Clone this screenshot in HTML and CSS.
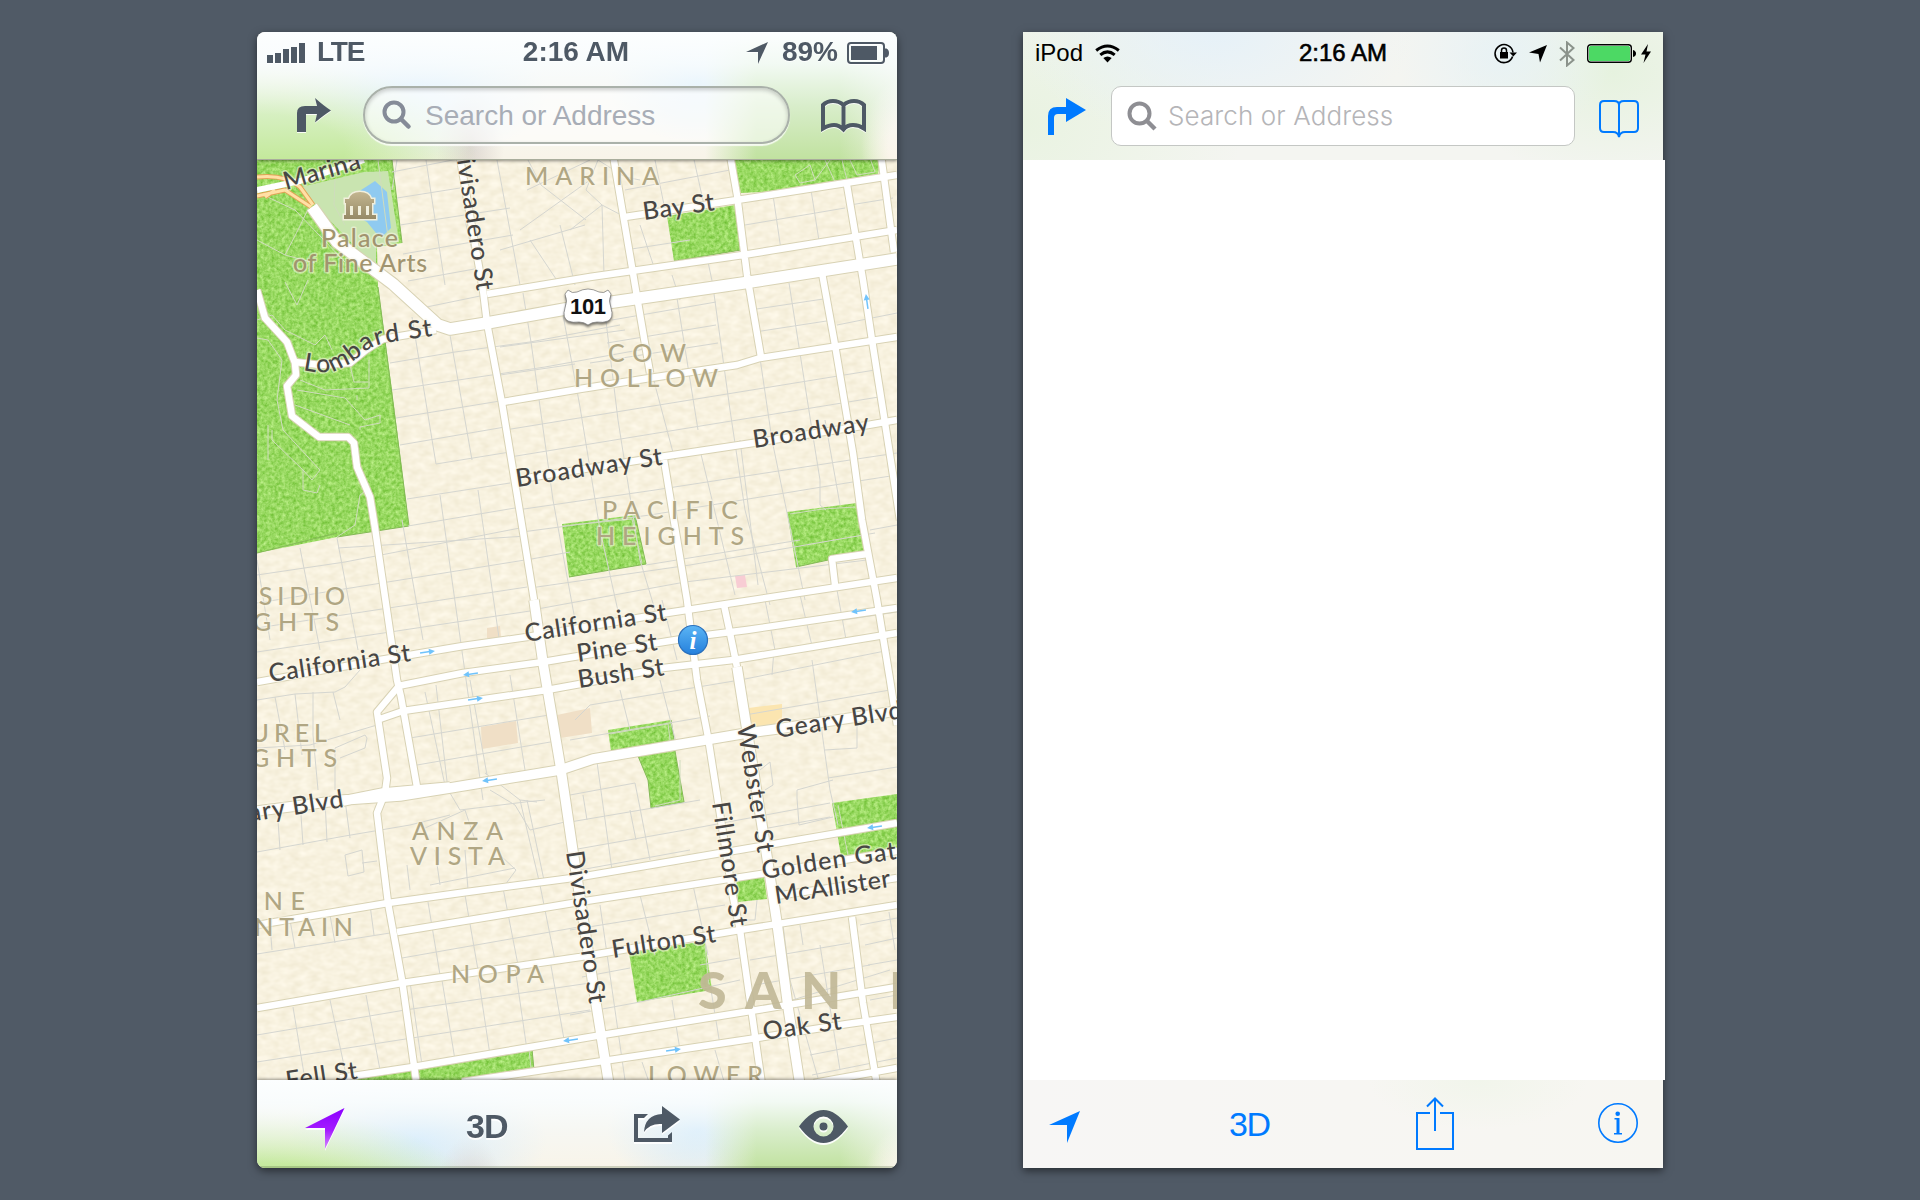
FILE: index.html
```html
<!DOCTYPE html>
<html lang="en">
<head>
<meta charset="utf-8">
<title>Maps</title>
<link rel="stylesheet" href="styles.css">
</head>
<body>
<main class="stage">
<section class="phone classic">
  <header class="top">
    <div class="status">
      <div class="status-left">
        <svg width="38" height="20" viewBox="0 0 38 20"><path d="M0 12h6v8H0zM8 10h6v10H8zM16 6h6v14h-6zM24 4h6v16h-6zM32 0h6v20h-6z"/></svg>
        <span class="carrier">LTE</span>
      </div>
      <span class="time">2:16 AM</span>
      <div class="status-right">
        <svg width="22" height="22" viewBox="0 0 22 22"><path d="M22 0L12 22V10H0z"/></svg>
        <span class="percent">89%</span>
        <svg class="battery" width="42" height="22" viewBox="0 0 42 22"><rect x="1" y="1" width="36" height="20" rx="3" fill="none" stroke="#4e5965" stroke-width="2"/><path d="M4 4h26v14H4zM38 6.5h1.500q2.500 1 2.500 4.500t-2.500 4.500H38z"/></svg>
      </div>
    </div>
    <div class="bar">
      <svg class="turn" width="35" height="35" viewBox="0 0 35 35"><path d="M0 34V15Q0 8 8 8H20L18 0Q27 8 34 12.500Q27 17 18 24.500L20 16H9V34z"/></svg>
      <div class="search">
        <svg width="30" height="30" viewBox="0 0 30 30"><circle cx="12" cy="12" r="9.500" fill="none" stroke="#858b98" stroke-width="4"/><path d="M19 19l7.500 7.500" stroke="#858b98" stroke-width="4.500" stroke-linecap="round"/></svg>
        <span>Search or Address</span>
      </div>
      <svg class="book" width="45" height="34" viewBox="0 0 45 34"><path d="M2 29.500V6Q6 2 12 2T22.500 6Q27 2 33 2T43 6V29.500Q38 26 32 26T22.500 30.500Q18 26 13 26T2 29.500zM22.500 5V29" fill="none" stroke="#4e5965" stroke-width="4"/></svg>
    </div>
  </header>
  <div class="map">
  <svg width="640" height="920" viewBox="257 160 640 920">
    <defs>
      <filter id="grass" x="0" y="0" width="100%" height="100%" color-interpolation-filters="sRGB">
        <feTurbulence type="fractalNoise" baseFrequency=".28" numOctaves="3" seed="4" result="n"/>
        <feColorMatrix in="n" values=".42 0 0 0 .385  .26 0 0 0 .72  .46 0 0 0 .15  0 0 0 0 1" result="c"/>
        <feComposite in="c" in2="SourceGraphic" operator="in"/>
      </filter>
      <filter id="sand" x="0" y="0" width="100%" height="100%" color-interpolation-filters="sRGB">
        <feTurbulence type="fractalNoise" baseFrequency=".1 .16" numOctaves="2" seed="2" result="n"/>
        <feColorMatrix in="n" values=".07 0 0 0 .937  .08 0 0 0 .908  .12 0 0 0 .815  0 0 0 0 1"/>
      </filter>
      <path id="lombard" d="M303 370Q328 376 345 366Q356 360 366 351Q374 345 391 342L445 334"/>
      <linearGradient id="pin" x1="0" y1="0" x2="0" y2="1"><stop offset="0" stop-color="#5bb5f5"/><stop offset="1" stop-color="#2580dc"/></linearGradient>
      <linearGradient id="stone" x1="0" y1="0" x2="0" y2="1"><stop offset="0" stop-color="#c3b58f"/><stop offset="1" stop-color="#968a67"/></linearGradient>
      <g id="roads">
        <path d="M457 141L483 290L487 323L502 403L520 513L534 600M257 290L265 318L287 342L295 363L296 375L287 386L292 416L319 437H348L354 443L357 467L370 497L375 528L397 680L401 697L417 787"/>
        <path d="M398 687L377 712L387 778L385 793L377 813L388 903L402 980L416 1080M377 720L403 711L547 690L580 684L663 668L733 660L897 633M398 686L463 673L543 662L657 643L707 635L747 630L897 608"/>
        <path d="M257 682L380 660L463 646L527 637L667 613L897 578M503 402L580 389L650 378L737 365L760 358L897 337M527 478L660 457L753 443L868 425L897 420"/>
        <path d="M664 460L687 600L697 680L708 737L733 897L740 930L762 1085M613 155L635 285L650 373M730 155L737 195L747 275L761 357M625 217L737 200L763 196L897 175M487 294L590 277L743 255L897 230"/>
        <path d="M847 185L863 280L872 340L885 423L900 520M822 273L835 345L853 453L862 520L877 600L890 680L897 725M881 155L894 252M867 554L832 559L835 585M724 605L730 633L737 667"/>
        <path d="M257 925L388 903L467 892L580 877L897 823M397 932L573 903L767 873L897 851M776 896L897 878M257 1008L402 983L580 957L740 930L897 905M340 1078L413 1067L602 1035L757 1010L897 987M462 1082L610 1060L757 1038L847 1024L897 1017M852 917L863 1003L877 1085M814 1083L897 1068M295 362L320 365L350 363L366 350L383 339L436 330"/>
      </g>
      <g id="wide">
        <path d="M534 600L543 663L561 770L572 845L595 997L609 1085M737 667L747 730L767 857L777 923L788 1007L800 1085"/>
        <path d="M257 811L343 800L400 796L450 788L560 770L593 759L747 733L777 729L897 711M343 801L383 793L450 787"/>
      </g>
      <path id="lomb-wide" d="M312 207L337 242L393 284L438 325L450 329L487 323L565 309L750 282L897 259"/>
      <g id="arrow"><path d="M-7 0H3" stroke="#70c3fb" stroke-width="1.500"/><path d="M2 -3L8 0L2 3z" fill="#70c3fb"/></g>
    </defs>
    <rect x="257" y="160" width="640" height="920" filter="url(#sand)"/>
    <g filter="url(#grass)">
      <path d="M257 160H392L402 243L377 247L378 287L392 390L409 526L337 537L257 553zM732 160H880L878 174L763 192L740 193zM667 216L735 205L741 250L674 261zM562 524L635 515L646 564L569 577zM787 512L857 503L865 552L796 567zM608 730L671 720L674 740L611 751zM638 756L675 751L684 802L651 808L648 780zM832 803L897 794V848L841 856zM736 879L764 876L767 899L738 902zM629 953L705 941L712 990L637 1002zM345 1080L532 1049L534 1070L462 1080z"/>
    </g>
    <path d="M392 160L402 243M378 287L409 526L337 537M257 553L337 533M635 515L646 564L569 577M671 720L674 740M675 751L684 802L651 808L648 780L638 756M741 250L674 261M796 567L865 552M532 1049L534 1070" fill="none" stroke="#84b957"/>
    <path d="M301 187L364 172L388 171L399 242L376 247V268L313 203z" fill="#c9e4b0"/>
    <path d="M375 181L387 192L391 228L383 236L376 233L367 222L360 218L358 192z" fill="#8fcaf0"/>
    <path d="M487 628L500 626L501 638H487zM481 727L516 721L518 743L482 749zM557 715L590 708L592 733L560 738z" fill="#f0dfc6"/>
    <path d="M748 708L782 704V723L750 727z" fill="#fbe5b0"/><path d="M735 576L745 575L747 587L737 588z" fill="#f8cdd4"/>
    <g class="lanes">
      <path d="M392 172L463 158M397 198L460 188M400 225L510 208M403 254L513 235M408 281L480 268M412 310L485 295M390 363L455 352L530 342L620 325M392 390L545 367L650 348M396 418L500 401M400 445L505 427M436 464L510 452M407 499L510 483M408 526L515 508M338 548L527 536M257 575L345 562L520 528M257 603L525 560M257 628L527 587M257 652L530 611M412 317L436 464M450 335L472 460M426 160L445 285M465 220L480 285M497 160L520 285M440 495L483 800M478 490L500 645M402 520L423 640M300 548L320 650M337 538L358 650M257 560L270 640"/>
      <path d="M523 293L531 342L553 500L575 620M563 315L580 407L600 530L620 620M605 313L618 420L640 560L655 610M640 300L655 385L675 460M677 298L698 430M714 294L730 410L745 510L770 605M750 290L772 440L805 600M789 283L812 430L820 480V505L826 510M825 420L840 505M500 347L625 330M500 375L575 364M612 320L716 302M607 343L716 325M590 363L718 343M750 310L830 298M755 332L833 320M837 325L897 313M505 430L875 370M510 457L885 396M517 510L655 490L850 460L897 453M522 532L650 515L865 480L897 475M526 560L570 552M646 565L800 540M530 588L690 565L875 533M532 610L685 582L867 560M870 530L897 525M700 450L735 595M740 440L758 585M662 600L677 660M765 600L775 650M800 595L813 650M837 590L847 645M843 620L897 612"/>
      <path d="M392 190L397 160M528 160L541 185L586 220M527 190L590 160M586 190L598 160L625 177L640 180M500 250L585 225M520 230L590 180M570 230L602 205L625 217M602 205L586 190M602 205L604 275M625 190L730 170M625 250L690 240M655 160L664 205M693 155L704 205M530 240L560 285M560 225L575 285M674 265L738 256M672 275L680 300M708 262L714 290M745 225L845 208M773 195L781 250M811 190L820 247M850 205L893 198M640 225L655 270"/>
      <path d="M257 700L295 694L335 692L345 687L360 670M257 748L310 745L377 725M275 697L285 750M295 694L302 755M313 692V735L318 790M333 692L340 720M340 758L365 748L367 738L365 735L335 748V790M257 852L345 836L410 825L450 815M277 805L280 850M300 800L303 845M325 800L327 842M345 800L350 838M345 855L362 850L364 872L348 876zM362 863L377 861M410 738L555 714M417 765L562 740M425 692L446 790M436 685L448 790M470 680L487 775M510 675L525 770M485 773L520 800L537 802M450 793L460 810L525 802L545 800M425 828L465 810L475 840M490 790L515 805L530 830L565 822M407 865L410 890M435 850L440 885M465 850L468 890M500 855L516 870L505 885M430 885L515 868M520 800L540 885M527 800L545 885"/>
      <path d="M402 958L590 925M397 932L416 1070M410 982L422 1065M257 1035L405 1010L590 983M257 1062L412 1038L590 1010M293 1007L305 1080M330 1000L345 1070M366 995L380 1070M442 980L455 1060M478 975L490 1055M515 967L527 1050M550 960L565 1045M257 954L390 933M270 925L272 950M290 920L295 948M330 915L335 943M370 905L374 935M428 902L440 975M465 895L478 970M503 888L518 965M540 885L555 960M575 720L590 705L740 680L890 650M570 740L710 716M570 795L635 783L640 808L650 860M583 795L587 820M630 810L636 840M570 822L700 800M572 850L685 830L830 803M580 870L690 850M596 755L612 870M620 690L630 730M660 680L678 750M570 930L725 905M582 977L630 968M600 905L625 1080M640 895L655 955M693 885L708 955M700 965L745 957M570 1015L640 1002L740 980M672 1000L680 1050M711 990L720 1045M642 1062L650 1085M715 1050L725 1085"/>
      <path d="M772 675L774 650M812 660L830 790L838 825M745 715L890 690M760 770L770 762L773 785L765 790M797 798V790L833 780M797 798L799 825L833 817M825 750L857 748V725M828 778L897 767M757 830L830 817M745 920H755L757 900M750 960L850 943M755 985L870 965M760 1010L890 970M783 925L790 980L820 1085M820 945L840 1070M860 925L897 918M865 945L897 938M868 965L897 960M870 1000L897 995M810 1055L897 1038M812 1075L897 1058M800 925L803 945M889 912L895 950"/>
    </g>
    <g class="lanes park">
      <path d="M257 240L285 255L315 263M310 205L298 230L285 255M257 192L295 210L345 262M285 282L297 305L308 280M257 320L272 315L285 330L315 345L325 335L332 350M257 338L268 340L282 360L277 400L283 430L320 470L312 480L303 470L303 490L317 493L320 485M268 425V460M272 430V440L305 472M300 380L325 390L369 388V360M297 390L345 398L365 420L380 415V423L360 427V430M295 405L350 425M357 395V400M350 365L354 382H368M337 537L355 525L360 495L367 490M795 175L810 165L815 180L830 160M815 180L800 183L795 175M825 160L835 182L847 180L842 160M850 160L857 175L875 172L870 158M562 526L632 519L642 563M610 734L668 724L670 740M790 514L823 509L855 507M680 760L680 800L655 806M705 945L709 985M838 805L848 855M529 1050L531 1068M334 170V172M378 160L389 245M335 180L334 205L345 225"/>
    </g>
    <g fill="none" stroke-linejoin="round">
      <path d="M257 177Q285 174 300 187L313 205M257 196L285 190L311 207M265 197L275 190" stroke="#e3a256" stroke-width="5"/><path d="M257 177Q285 174 300 187L313 205M257 196L285 190L311 207M265 197L275 190" stroke="#ffe0a5" stroke-width="3"/>
      <g stroke="#d8d2b4"><use href="#roads" stroke-width="8.500"/><use href="#wide" stroke-width="11.500"/><use href="#lomb-wide" stroke-width="13.500"/></g>
      <g stroke="#fff"><path d="M257 190L300 181L364 160" stroke-width="6"/><use href="#roads" stroke-width="6.500"/><use href="#wide" stroke-width="9.500"/><use href="#lomb-wide" stroke-width="11.500"/></g>
    </g>
    <use href="#arrow" transform="translate(427 652) rotate(-8)"/><use href="#arrow" transform="translate(471 674) rotate(172)"/><use href="#arrow" transform="translate(475 699) rotate(-8)"/><use href="#arrow" transform="translate(490 780) rotate(172)"/><use href="#arrow" transform="translate(571 1040) rotate(172)"/><use href="#arrow" transform="translate(673 1050) rotate(-8)"/><use href="#arrow" transform="translate(875 827) rotate(172)"/><use href="#arrow" transform="translate(859 611) rotate(172)"/><use href="#arrow" transform="translate(867 302) rotate(-98)"/>
    <g class="area">
      <text x="525" y="185" textLength="134">MARINA</text>
      <text x="608" y="362" textLength="78">COW</text><text x="574" y="387" textLength="144">HOLLOW</text>
      <text x="602" y="519" textLength="136">PACIFIC</text><text x="596" y="545" textLength="148">HEIGHTS</text>
      <text x="199" y="605" textLength="146">PRESIDIO</text><text x="192" y="631" textLength="147">HEIGHTS</text>
      <text x="211" y="742" textLength="116">LAUREL</text><text x="190" y="767" textLength="147">HEIGHTS</text>
      <text x="412" y="840" textLength="91">ANZA</text><text x="410" y="865" textLength="95">VISTA</text>
      <text x="216" y="910" textLength="89">LONE</text><text x="175" y="936" textLength="178">MOUNTAIN</text>
      <text x="451" y="983" textLength="93">NOPA</text><text x="648" y="1084" textLength="115">LOWER</text>
    </g>
    <g class="city"><text x="698" y="1009">S</text><text x="745" y="1009">A</text><text x="801" y="1009">N</text><text x="889" y="1009">F</text></g>
    <g class="street">
      <text transform="translate(286 190) rotate(-16)" textLength="79">Marina</text>
      <text transform="translate(454 141) rotate(81.300)" textLength="152">Divisadero St</text>
      <text transform="translate(566 852) rotate(81.300)" textLength="154">Divisadero St</text>
      <text textLength="138"><textPath href="#lombard" textLength="138">Lombard St</textPath></text>
      <text transform="translate(644 220) rotate(-8)" textLength="72">Bay St</text>
      <text transform="translate(517 487) rotate(-8.700)" textLength="148">Broadway St</text>
      <text transform="translate(754 448) rotate(-8.500)" textLength="117">Broadway</text>
      <text transform="translate(270 682) rotate(-8.500)" textLength="143">California St</text>
      <text transform="translate(526 642) rotate(-8.700)" textLength="143">California St</text>
      <text transform="translate(578 662) rotate(-8.500)" textLength="81">Pine St</text>
      <text transform="translate(579 688) rotate(-8.500)" textLength="87">Bush St</text>
      <text transform="translate(777 738) rotate(-8.900)" textLength="128">Geary Blvd</text>
      <text transform="translate(217 827) rotate(-8.900)" textLength="129">Geary Blvd</text>
      <text transform="translate(737 726) rotate(80.800)" textLength="129">Webster St</text>
      <text transform="translate(712 803) rotate(81.300)" textLength="126">Fillmore St</text>
      <text transform="translate(763 879) rotate(-8.500)" textLength="202">Golden Gate Ave</text>
      <text transform="translate(776 904) rotate(-8.500)" textLength="146">McAllister St</text>
      <text transform="translate(613 958) rotate(-8.900)" textLength="105">Fulton St</text>
      <text transform="translate(764 1040) rotate(-8)" textLength="79">Oak St</text>
      <text transform="translate(287 1089) rotate(-8.500)" textLength="72">Fell St</text>
    </g>
    <g class="poi"><text x="321" y="247" textLength="77">Palace</text><text x="293" y="272" textLength="134">of Fine Arts</text></g>
    <path d="M349 199Q351 192 360 192T371 199H374V203H372V215H376V219H344V215H346V203H345V199zM350 206V215H353V206zM358 206V215H361V206zM366 206V215H369V206z" fill="url(#stone)" fill-rule="evenodd" stroke="#f1efdc" stroke-width="3" paint-order="stroke"/>
    <path class="shield" d="M568 290Q572 294 577 292Q583 289 588 289T599 292Q604 294 608 290L611 294Q608 301 611 308Q614 318 608 321Q603 323 597 322Q592 322 588 325Q584 322 579 322Q573 323 568 321Q562 318 565 308Q568 301 565 294z" fill="#fff" stroke="#777" stroke-width=".7"/>
    <text class="route" x="588" y="314" textLength="36" text-anchor="middle">101</text>
    <circle cx="693" cy="640" r="14.500" fill="url(#pin)" stroke="#2a70bd" stroke-width="1.200"/>
    <text class="info" x="693" y="649" text-anchor="middle">i</text>
  </svg>
  </div>
  <footer class="bottom">
    <svg width="40" height="42" viewBox="0 0 40 42"><defs><linearGradient id="violet" x1="0" y1="0" x2="0" y2="1"><stop offset="0" stop-color="#8a00ff"/><stop offset=".55" stop-color="#a51cff"/><stop offset="1" stop-color="#d58bff"/></linearGradient></defs><path d="M39.500 0L20 41V20H0z" fill="url(#violet)"/></svg>
    <span class="three">3D</span>
    <svg width="46" height="36" viewBox="0 0 46 36"><path d="M14 8H0V36H38V26L34 29.500V32H4V12H10z"/><path d="M28 0L46 13.500L28 27V18Q16 17 10 26Q11 9 28 8z"/></svg>
    <svg width="49" height="33" viewBox="0 0 49 33"><path fill-rule="evenodd" d="M0 16.500Q12 0 24.500 0T49 16.500Q37 33 24.500 33T0 16.500zM24.500 6.500A10 10 0 1 0 24.500 26.500A10 10 0 1 0 24.500 6.500zM24.500 12.500A4 4 0 1 1 24.500 20.500A4 4 0 1 1 24.500 12.500z"/></svg>
  </footer>
</section>

<section class="phone flat">
  <header class="top">
    <div class="status">
      <div class="status-left">
        <span class="carrier">iPod</span>
        <svg class="wifi" width="25" height="19" viewBox="0 0 25 19"><g fill="none" stroke="#000" stroke-width="3"><path d="M1.200 6.500Q12.500-2.500 23.800 6.500M5.300 10.800Q12.500 5 19.700 10.800"/></g><path d="M8.300 14Q12.500 11 16.700 14L12.500 18.500z"/></svg>
      </div>
      <span class="time">2:16 AM</span>
      <div class="status-right">
        <svg width="23" height="21" viewBox="0 0 23 21"><path d="M18.600 13.500A9 9 0 1 1 19 9.500" fill="none" stroke="#000" stroke-width="1.600"/><path d="M15.500 9.500H23L19.300 13.500zM6 9H14V15.500H6z"/><path d="M7.500 9V7.500Q7.500 5 10 5T12.500 7.500V9" fill="none" stroke="#000" stroke-width="1.500"/></svg>
        <svg class="loc" width="18" height="18" viewBox="0 0 18 18"><path d="M18 0L11 17.500L9.500 9L0 7.500z"/></svg>
        <svg class="bt" width="16" height="26" viewBox="0 0 16 26"><path d="M1 6.500L14.500 19L8 24.500V1.500L14.500 7L1 19.500" fill="none" stroke="#8b938b" stroke-width="2"/></svg>
        <svg class="battery" width="49" height="19" viewBox="0 0 49 19"><rect x=".7" y=".7" width="43.600" height="17.600" rx="3" fill="#fff" stroke="#000" stroke-width="1.400"/><rect x="2" y="2" width="41" height="15" rx="1.500" fill="#4cd964"/><path d="M46 6Q49 7 49 9.500T46 13z"/></svg>
        <svg class="bolt" width="10" height="19" viewBox="0 0 10 19"><path d="M7 0L0 10.500H4.500L2.500 19L10 7.500H5.500z"/></svg>
      </div>
    </div>
    <div class="bar">
      <svg class="turn" width="38" height="37" viewBox="0 0 38 37"><path d="M0 37V18Q0 9 9 9H18V0L38 12L18 24V16H10Q6 16 6 20V37z"/></svg>
      <div class="search">
        <svg width="30" height="30" viewBox="0 0 30 30"><circle cx="12.500" cy="12.500" r="10" fill="none" stroke="#8e8e93" stroke-width="4"/><path d="M20 20l8 8" stroke="#8e8e93" stroke-width="4.500"/></svg>
        <span>Search or Address</span>
      </div>
      <svg class="book" width="40" height="39" viewBox="0 0 40 39"><path d="M20 36V5Q20 1 15 1H5Q1 1 1 5V28Q1 32 5 32H14Q19 32 20 37Q21 32 26 32H35Q39 32 39 28V5Q39 1 35 1H25Q20 1 20 5" fill="none" stroke="#007aff" stroke-width="2"/></svg>
    </div>
  </header>
  <div class="map"></div>
  <footer class="bottom">
    <svg width="31" height="32" viewBox="0 0 31 32"><path d="M31 0L18 32V14H0z"/></svg>
    <span class="three">3D</span>
    <svg class="share" width="38" height="53" viewBox="0 0 38 53"><path d="M14 16H1V52H37V16H24M19 34V2M11 9.500L19 1.500L27 9.500" fill="none" stroke="#007aff" stroke-width="2"/></svg>
    <svg width="40" height="40" viewBox="0 0 40 40"><circle cx="20" cy="20" r="19.200" fill="none" stroke="#007aff" stroke-width="1.600"/><path d="M16.500 15H21.500V30H24V31.500H16V30H18.500V16.500H16.500z"/><circle cx="19.700" cy="10.700" r="2.300"/></svg>
  </footer>
</section>
</main>
</body>
</html>
```
FILE: styles.css
```css
* { box-sizing: border-box; }
body {
  margin: 0;
  width: 1920px;
  height: 1200px;
  overflow: hidden;
  background: #505a66;
  font-family: "Liberation Sans", Arial, sans-serif;
}
svg { display: block; flex: none; }
.stage { display: flex; gap: 126px; padding: 32px 0 0 257px; }
.phone {
  width: 640px;
  height: 1136px;
  display: flex;
  flex-direction: column;
  box-shadow: 0 3px 8px rgba(0, 0, 0, .5);
}
.top { height: 128px; flex: none; }
.status { height: 40px; display: grid; grid-template-columns: 1fr auto 1fr; align-items: center; }
.status-left, .status-right { display: flex; align-items: center; }
.status-right { justify-content: flex-end; }
.status span { margin-top: -2px; }
.bar { display: flex; align-items: flex-start; }
.search { display: flex; align-items: center; white-space: nowrap; }
.map { height: 920px; flex: none; }
.bottom { height: 88px; display: grid; align-items: start; }

/* textured toolbars */
.classic { border-radius: 8px; overflow: hidden; color: #4e5965; fill: #4e5965; }
.classic .top, .classic .bottom {
  position: relative;
  background:
    linear-gradient(180deg, #fcfeff 0%, rgba(249, 253, 255, .88) 25%, rgba(245, 251, 255, .45) 58%, rgba(255, 255, 255, 0) 100%),
    radial-gradient(ellipse 46px 70px at 650px 115px, #faf5ea 40%, rgba(250, 245, 234, 0) 100%),
    linear-gradient(90deg, rgba(193, 226, 160, 0) 70%, #c1e2a0 78%, #c1e2a0 91%, rgba(216, 236, 196, .5) 100%),
    radial-gradient(ellipse 220px 90px at 0 118px, #c4e99c 40%, rgba(200, 233, 165, 0) 100%),
    radial-gradient(ellipse 34px 60px at 213px 115px, rgba(214, 206, 200, .8), rgba(220, 212, 205, 0)),
    radial-gradient(ellipse 130px 70px at 160px 60px, #cfe8fa, rgba(208, 233, 250, 0)),
    radial-gradient(ellipse 90px 60px at 440px 50px, #d0e8f8, rgba(208, 233, 250, 0)),
    #f8f4e9;
}
.classic .top { box-shadow: 0 1px 3px rgba(0, 0, 0, .45); border-bottom: 1px solid #a9ad9c; }
.classic .bottom { box-shadow: 0 -1px 3px rgba(0, 0, 0, .4), inset 0 -2px 0 rgba(80, 100, 60, .25); }
.classic .status, .classic .bar > svg { filter: drop-shadow(0 1.500px 0 rgba(255, 255, 255, .85)); }
.classic .bottom > * { filter: drop-shadow(0 2px 0 rgba(255, 255, 255, .9)); }
.classic .status { padding: 1px 8px 0 10px; font-size: 28px; font-weight: 700; }
.classic .status-left { gap: 12px; }
.classic .carrier { letter-spacing: -1.200px; }
.classic .time { position: relative; left: -2px; }
.classic .status-right { gap: 9px; }
.classic .percent { margin-left: 5px; }
.classic .bar { padding: 14px 31px 0 40px; }
.classic .turn { margin-top: 12px; }
.classic .search {
  width: 428px;
  height: 58px;
  margin-left: 31px;
  padding-left: 17px;
  gap: 13px;
  border: 2px solid #aab1aa;
  border-radius: 29px;
  background: rgba(255, 255, 255, .58);
  box-shadow: inset 0 2px 4px rgba(0, 0, 0, .2), 0 2px 1px rgba(255, 255, 255, .8);
  color: #a8adb6;
  font-size: 28px;
}
.classic .search span { padding-top: 2px; }
.classic .book { margin: 13px 0 0 31px; }
.classic .bottom { grid-template-columns: 161px 168px 165px 1fr; padding: 28px 0 0 48px; }
.classic .three { font-size: 34px; font-weight: 700; line-height: 36px; letter-spacing: -1px; }
.classic .bottom svg:nth-of-type(2) { margin-top: -2px; }
.classic .bottom svg:nth-of-type(3) { margin-top: 2px; }

/* map lettering */
.lanes { fill: none; stroke: #d5d6d0; stroke-width: 1; }
.park { stroke: #cfdcbd; }
.street, .area, .poi, .city { font-family: Lato, "Open Sans", sans-serif; }
.street, .area, .poi { paint-order: stroke; stroke: rgba(250, 246, 231, .55); stroke-width: 3px; stroke-linejoin: round; font-size: 25px; font-weight: 500; }
.street { fill: #484644; }
.area { fill: #b0a683; }
.poi { fill: #a1946f; }
.city { fill: #c2b998; font-size: 52px; font-weight: 900; opacity: .92; }
.route { font: 700 22px "Liberation Sans", sans-serif; fill: #111; }
.info { font: italic 700 25px "Liberation Serif", serif; fill: #fff; }
.shield { filter: drop-shadow(0 2px 1px rgba(0, 0, 0, .5)); }

/* flat toolbars */
.flat { color: #000; fill: #000; }
.flat .top {
  background:
    radial-gradient(ellipse 200px 110px at 190px 0, #e6f1f8, rgba(230, 241, 248, 0)),
    radial-gradient(ellipse 110px 90px at 480px 20px, #e8f2f5, rgba(232, 242, 245, 0)),
    radial-gradient(ellipse 160px 110px at 590px 40px, #e6f2df, rgba(230, 242, 223, 0)),
    radial-gradient(ellipse 220px 180px at 0 90px, #e9f3e1, rgba(233, 243, 225, 0)),
    #f4f5f1;
}
.flat .status { padding: 3px 12px 0 12px; font-size: 24px; }
.flat .time { -webkit-text-stroke: .6px #000; }
.flat .status-left { gap: 12px; }
.flat .loc { margin-left: 12px; }
.flat .bt { margin-left: 12px; }
.flat .battery { margin-left: 12px; }
.flat .bolt { margin-left: 5px; }
.flat .bar, .flat .bottom { fill: #007aff; color: #007aff; }
.flat .bar { padding: 14px 24px 0 25px; }
.flat .turn { margin-top: 12px; }
.flat .search {
  width: 464px;
  height: 60px;
  margin-left: 25px;
  padding-left: 15px;
  gap: 11px;
  border: 1px solid #c4c7c4;
  border-radius: 10px;
  background: #fff;
  color: #b5b5b8;
  font: 300 26px Inter, "Liberation Sans", sans-serif;
  letter-spacing: .1px;
}
.flat .search span { margin-top: -2px; }
.flat .book { margin: 14px 0 0 24px; }
.flat .map { width: 642px; background: #fff; }
.flat .bottom {
  grid-template-columns: 180px 187px 182px 1fr;
  padding: 23px 0 0 26px;
  background: radial-gradient(ellipse 110px 50px at 455px 0, #f1f5eb, rgba(241, 245, 235, 0)), linear-gradient(90deg, #f7f6f5, #f7f6f1);
}
.flat .three { font-size: 34px; line-height: 38px; padding-top: 2px; letter-spacing: -1.500px; }
.flat .bottom svg:first-child { margin-top: 8px; }
.flat .share { margin-top: -6px; }
```
